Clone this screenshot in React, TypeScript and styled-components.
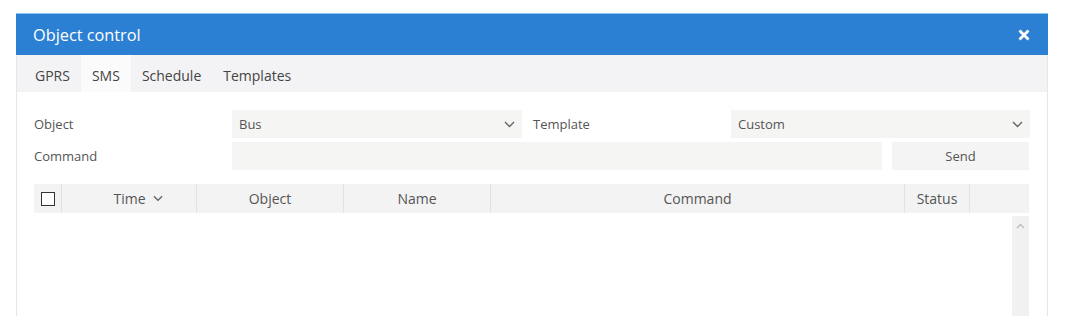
import React from 'react';
import styled, { createGlobalStyle } from 'styled-components';

const Global = createGlobalStyle`
  body {
    margin: 0;
    background: #ffffff;
    font-family: "Open Sans", "Liberation Sans", sans-serif;
    overflow: hidden;
  }
`;

const Page = styled.div`
  padding: 13px 21px 0 16px;
`;

const Dialog = styled.section`
  width: 1032px;
  height: 340px;
  display: flex;
  flex-direction: column;
  background: #fff;
  border: 1px solid #e6e6e6;
  border-top: none;
  box-sizing: border-box;
`;

const Header = styled.header`
  display: flex;
  align-items: center;
  justify-content: space-between;
  height: 42px;
  margin: 0 -1px;
  padding: 0 18px 0 17px;
  background: #2c80d3;
  border-top: 1px solid #8cc4f0;
  box-sizing: border-box;
  color: #fff;
  font-size: 16.3px;
`;

const Close = styled.button`
  display: flex;
  border: none;
  background: none;
  padding: 0;
  cursor: pointer;
`;

const Tabs = styled.nav`
  display: flex;
  height: 37px;
  padding-left: 7px;
  background: #f3f3f5;
`;

const Tab = styled.div<{ $active?: boolean }>`
  display: flex;
  align-items: center;
  padding: 3px 11px 0;
  font-size: 14px;
  color: #444;
  background: ${(p) => (p.$active ? '#fbfbfb' : 'transparent')};
`;

const Body = styled.div`
  display: flex;
  flex-direction: column;
  padding: 18px 18px 0 17px;
`;

const FormRow = styled.div`
  display: flex;
  align-items: center;
  height: 28px;
  margin-bottom: 4px;
`;

const Label = styled.div<{ $w: number }>`
  width: ${(p) => p.$w}px;
  flex: none;
  font-size: 13px;
  color: #555;
`;

const Field = styled.div<{ $w: number }>`
  width: ${(p) => p.$w}px;
  flex: none;
  height: 28px;
  display: flex;
  align-items: center;
  justify-content: space-between;
  padding: 0 7px;
  box-sizing: border-box;
  background: #f5f5f4;
  font-size: 13px;
  color: #555;
`;

const SendButton = styled.button`
  width: 138px;
  height: 28px;
  margin-left: 10px;
  border: none;
  background: #f4f4f4;
  font-family: inherit;
  font-size: 13px;
  color: #555;
`;

const Table = styled.div`
  margin-top: 10px;
  display: flex;
  flex-direction: column;
`;

const HeadRow = styled.div`
  display: flex;
  height: 29px;
  background: #f3f3f3;
`;

const HeadCell = styled.div<{ $w: number; $last?: boolean; $shift?: number }>`
  width: ${(p) => p.$w}px;
  flex: none;
  display: flex;
  align-items: center;
  justify-content: center;
  gap: 7px;
  padding-left: ${(p) => p.$shift || 0}px;
  font-size: 14px;
  color: #555;
  border-right: ${(p) => (p.$last ? 'none' : '1px solid #e2e2e2')};
  box-sizing: border-box;
`;

const Check = styled.span`
  width: 14px;
  height: 14px;
  border: 1.5px solid #333;
  box-sizing: border-box;
  background: #fff;
`;

const Rows = styled.div`
  display: flex;
  justify-content: flex-end;
  height: 120px;
  padding-top: 3px;
`;

const Scroll = styled.div`
  width: 17px;
  display: flex;
  justify-content: center;
  padding-top: 7px;
  background: #f1f1f1;
`;

const Chevron = ({ w = 11 }: { w?: number }) => (
  <svg width={w} height="7" viewBox="0 0 11 7">
    <polyline points="1,1 5.5,5.5 10,1" fill="none" stroke="#666" strokeWidth="1.4" />
  </svg>
);

const columns = [
  { w: 135, label: 'Time', sort: true, shift: 18 },
  { w: 147, label: 'Object' },
  { w: 147, label: 'Name' },
  { w: 414, label: 'Command' },
  { w: 65, label: 'Status' },
];

export default function App() {
  return (
    <>
      <Global />
      <Page>
        <Dialog>
          <Header>
            <span>Object control</span>
            <Close>
              <svg width="12" height="12" viewBox="0 0 12 12">
                <path d="M1.5 1.5 L10.5 10.5 M10.5 1.5 L1.5 10.5" stroke="#fff" strokeWidth="2.8" />
              </svg>
            </Close>
          </Header>
          <Tabs>
            <Tab>GPRS</Tab>
            <Tab $active>SMS</Tab>
            <Tab>Schedule</Tab>
            <Tab>Templates</Tab>
          </Tabs>
          <Body>
            <FormRow>
              <Label $w={198}>Object</Label>
              <Field $w={290}>
                Bus
                <Chevron />
              </Field>
              <Label $w={198} style={{ paddingLeft: 11 }}>Template</Label>
              <Field $w={299}>
                Custom
                <Chevron />
              </Field>
            </FormRow>
            <FormRow>
              <Label $w={198}>Command</Label>
              <Field $w={650} />
              <SendButton>Send</SendButton>
            </FormRow>
            <Table>
              <HeadRow>
                <HeadCell $w={28}>
                  <Check />
                </HeadCell>
                {columns.map((c) => (
                  <HeadCell key={c.label} $w={c.w} $shift={c.shift}>
                    {c.label}
                    {c.sort && <Chevron w={10} />}
                  </HeadCell>
                ))}
                <HeadCell $w={60} $last />
              </HeadRow>
              <Rows>
                <Scroll>
                  <svg width="9" height="6" viewBox="0 0 9 6">
                    <polyline points="1,5 4.5,1.5 8,5" fill="none" stroke="#bbb" strokeWidth="1.3" />
                  </svg>
                </Scroll>
              </Rows>
            </Table>
          </Body>
        </Dialog>
      </Page>
    </>
  );
}
